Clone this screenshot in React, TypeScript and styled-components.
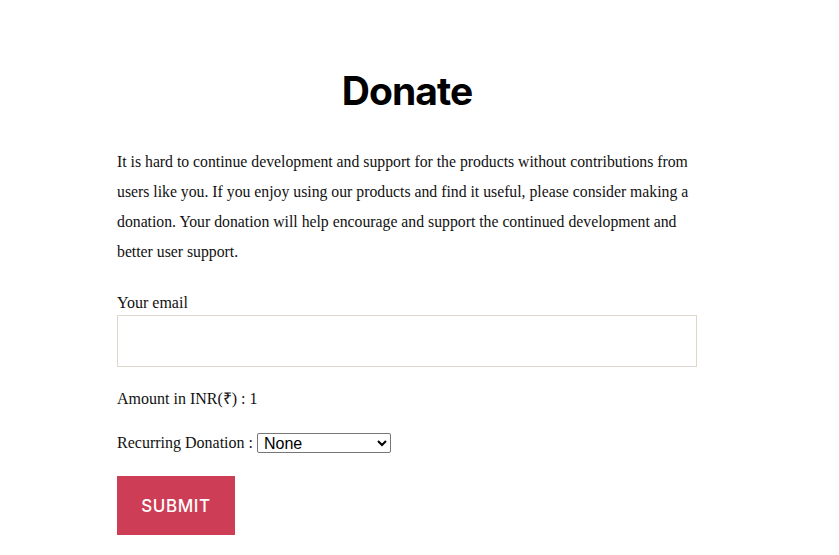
import React from "react";
import styled, { createGlobalStyle } from "styled-components";

const Global = createGlobalStyle`
  html, body { margin: 0; padding: 0; background: #fff; }
  body { font-family: "Liberation Serif", serif; color: #1a1a1a; }
`;

const Page = styled.div`
  display: flex;
  justify-content: center;
  padding: 67px 25px 0 0;
`;

const Column = styled.main`
  width: 580px;
  display: flex;
  flex-direction: column;
`;

const Title = styled.h1`
  margin: 0 0 32px;
  text-align: center;
  font-family: Inter, sans-serif;
  font-weight: 700;
  font-size: 39px;
  letter-spacing: -0.9px;
  line-height: 48px;
  color: #000;
`;

const Intro = styled.p`
  margin: 0 0 26px;
  font-size: 15.75px;
  line-height: 30px;
  color: #111;
`;

const Field = styled.label`
  display: flex;
  flex-direction: column;
  font-size: 16px;
  line-height: 20px;
  color: #111;
  gap: 2px;
`;

const EmailInput = styled.input`
  box-sizing: border-box;
  width: 100%;
  height: 52px;
  border: 1px solid #dcd7ca;
  border-radius: 0;
  background: #fff;
  font-size: 16px;
  padding: 0 12px;
  outline: none;
`;

const Line = styled.div<{ $top?: number }>`
  margin-top: ${(p) => p.$top ?? 24}px;
  font-size: 16px;
  line-height: 20px;
  color: #111;
  display: flex;
  align-items: center;
  gap: 4px;
`;

const Select = styled.select`
  font-family: "Liberation Sans", Arial, sans-serif;
  font-size: 16px;
  width: 134px;
  height: 20px;
  padding: 0 2px;
  border: 1px solid #767676;
  border-radius: 2px;
  background: #fff;
  color: #000;
`;

const Submit = styled.button`
  margin-top: 23px;
  align-self: flex-start;
  width: 118px;
  height: 59px;
  border: none;
  background: #cd3d55;
  color: #fff;
  font-family: Inter, sans-serif;
  font-weight: 500;
  font-size: 17px;
  letter-spacing: 0.6px;
  text-transform: uppercase;
  cursor: pointer;
`;

export default function App() {
  return (
    <>
      <Global />
      <Page>
        <Column>
          <Title>Donate</Title>
          <Intro>
            It is hard to continue development and support for the products without contributions from
            users like you. If you enjoy using our products and find it useful, please consider making a
            donation. Your donation will help encourage and support the continued development and
            better user support.
          </Intro>
          <Field>
            Your email
            <EmailInput type="email" />
          </Field>
          <Line $top={22}>Amount in INR(₹) : 1</Line>
          <Line>
            Recurring Donation :
            <Select defaultValue="None">
              <option>None</option>
              <option>Monthly</option>
              <option>Yearly</option>
            </Select>
          </Line>
          <Submit>Submit</Submit>
        </Column>
      </Page>
    </>
  );
}
